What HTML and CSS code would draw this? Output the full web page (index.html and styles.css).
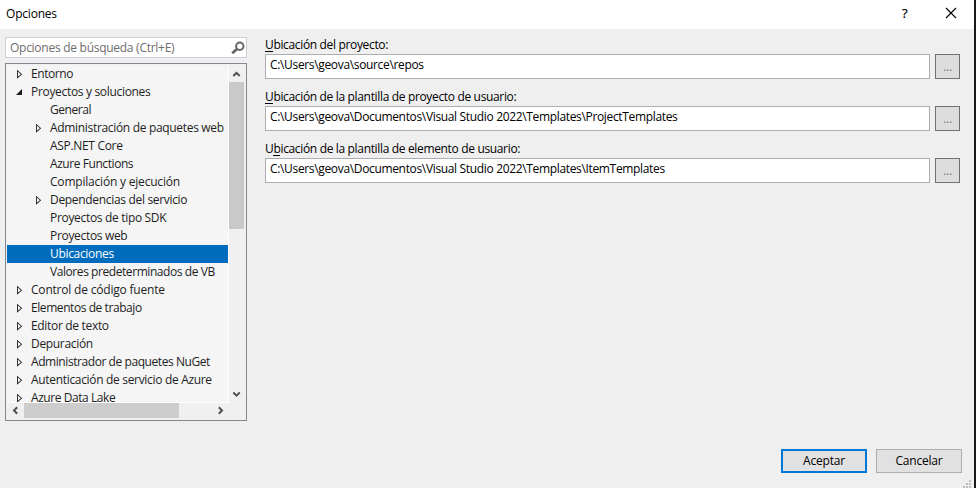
FILE: index.html
```html
<!DOCTYPE html>
<html lang="es">
<head>
<meta charset="utf-8">
<title>Opciones</title>
<link rel="stylesheet" href="styles.css">
</head>
<body>
<div class="dialog">
  <header class="titlebar">
    <span class="title">Opciones</span>
    <span class="help">?</span>
    <svg class="close" width="12" height="12" viewBox="0 0 12 12"><path d="M1 1L11 11M11 1L1 11"/></svg>
  </header>
  <main class="content">
    <aside class="sidebar">
      <div class="search">
        <span>Opciones de búsqueda (Ctrl+E)</span>
        <svg width="14" height="14" viewBox="0 0 14 14"><circle cx="8.8" cy="5.2" r="3.7"/><path class="handle" d="M6 8L1.2 12.3"/></svg>
      </div>
      <div class="tree">
        <ul class="rows">
          <li><i class="arrow"></i><span class="tight">Entorno</span></li>
          <li><i class="arrow open"></i><span>Proyectos y soluciones</span></li>
          <li class="sub"><i></i><span class="tight">General</span></li>
          <li class="sub"><i class="arrow"></i><span>Administración de paquetes web</span></li>
          <li class="sub"><i></i><span>ASP.NET Core</span></li>
          <li class="sub"><i></i><span class="tight">Azure Functions</span></li>
          <li class="sub"><i></i><span class="loose">Compilación y ejecución</span></li>
          <li class="sub"><i class="arrow"></i><span>Dependencias del servicio</span></li>
          <li class="sub"><i></i><span>Proyectos de tipo SDK</span></li>
          <li class="sub"><i></i><span>Proyectos web</span></li>
          <li class="sub selected"><i></i><span>Ubicaciones</span></li>
          <li class="sub"><i></i><span class="tight">Valores predeterminados de VB</span></li>
          <li><i class="arrow"></i><span class="loose">Control de código fuente</span></li>
          <li><i class="arrow"></i><span class="tight">Elementos de trabajo</span></li>
          <li><i class="arrow"></i><span>Editor de texto</span></li>
          <li><i class="arrow"></i><span>Depuración</span></li>
          <li><i class="arrow"></i><span class="tight">Administrador de paquetes NuGet</span></li>
          <li><i class="arrow"></i><span>Autenticación de servicio de Azure</span></li>
          <li><i class="arrow"></i><span class="tight">Azure Data Lake</span></li>
        </ul>
        <div class="vbar">
          <svg width="15" height="17" viewBox="0 0 15 17"><path d="M4.3 11L7.5 7.8L10.7 11"/></svg>
          <div class="thumb"></div>
          <svg class="end" width="15" height="17" viewBox="0 0 15 17"><path d="M4.3 6.5L7.5 9.7L10.7 6.5"/></svg>
        </div>
        <div class="hbar">
          <svg width="17" height="15" viewBox="0 0 17 15"><path d="M10.2 4.3L7 7.5L10.2 10.7"/></svg>
          <div class="thumb"></div>
          <svg class="end" width="17" height="15" viewBox="0 0 17 15"><path d="M6.8 4.3L10 7.5L6.8 10.7"/></svg>
        </div>
      </div>
    </aside>
    <section class="fields">
      <div class="field">
        <label><u>U</u>bicación del proyecto:</label>
        <div class="line"><div class="input">C:\Users\geova\source\repos</div><button class="browse">...</button></div>
      </div>
      <div class="field">
        <label><u>U</u>bicación de la plantilla de proyecto de usuario:</label>
        <div class="line"><div class="input">C:\Users\geova\Documentos\Visual Studio 2022\Templates\ProjectTemplates</div><button class="browse">...</button></div>
      </div>
      <div class="field">
        <label>U<u>b</u>icación de la plantilla de elemento de usuario:</label>
        <div class="line"><div class="input">C:\Users\geova\Documentos\Visual Studio 2022\Templates\ItemTemplates</div><button class="browse">...</button></div>
      </div>
    </section>
  </main>
  <footer class="footer">
    <button class="action primary">Aceptar</button>
    <button class="action">Cancelar</button>
  </footer>
  <svg class="grip" width="9" height="9" viewBox="0 0 9 9"><path d="M6 0h2v2h-2zM3 3h2v2h-2zM6 3h2v2h-2zM0 6h2v2h-2zM3 6h2v2h-2zM6 6h2v2h-2z"/></svg>
</div>
</body>
</html>
```
FILE: styles.css
```css
* { box-sizing: border-box; }
body {
  margin: 0;
  background: #efefef;
  font: 12px/18px "Open Sans", "Noto Sans", sans-serif;
  letter-spacing: -0.2px;
  color: #000;
}
button { font: inherit; letter-spacing: inherit; padding: 0; color: #000; }
.dialog {
  position: relative;
  display: flex;
  flex-direction: column;
  width: 976px;
  height: 488px;
  border-right: 2px solid #1a1a1a;
  overflow: hidden;
}
.titlebar {
  display: flex;
  align-items: center;
  flex: none;
  height: 29px;
  padding: 0 17px 3px 6px;
  background: #fff;
}
.title { flex: 1; padding-top: 2px; }
.help { width: 7px; margin-right: 36px; font-size: 13px; font-weight: 500; -webkit-text-stroke: 0.2px #000; }
.close { fill: none; stroke: #000; stroke-width: 1.1; }
.content { display: flex; gap: 18px; padding: 8px 14px 0 5px; height: 420px; }
.sidebar { width: 242px; flex: none; }
.search {
  display: flex;
  align-items: center;
  justify-content: space-between;
  height: 21px;
  padding: 0 1px 0 4px;
  border: 1px solid #ccceda;
  background: #fff;
  color: #6d6d6d;
  letter-spacing: -0.27px;
}
.search svg { fill: none; stroke: #656565; stroke-width: 2; }
.search .handle { stroke-width: 2.8; }
.tree {
  display: grid;
  grid-template: 338px 17px / 222px 16px;
  height: 358px;
  margin-top: 5px;
  padding: 1px;
  border: 1px solid #828790;
  background: #f0f0f0;
}
.rows {
  margin: 0;
  padding: 0;
  list-style: none;
  overflow: hidden;
  border-right: 1px solid #fff;
  border-bottom: 1px solid #fff;
  background: #f5f5f5;
  color: #1e1e1e;
  letter-spacing: -0.32px;
  white-space: nowrap;
}
.rows .tight { letter-spacing: -0.43px; }
.rows .loose { letter-spacing: -0.2px; }
.rows li { display: flex; align-items: center; height: 18px; padding-left: 9px; }
.rows .sub { padding-left: 28px; }
.rows i { width: 15px; height: 10px; flex: none; }
.rows .arrow { background: #1e1e1e; clip-path: path(evenodd, "M1 0.7L6.2 5.2L1 9.7ZM1.9 2.6V7.8L4.9 5.2Z"); }
.rows .open { clip-path: path("M6 2V8H0Z"); }
.rows .selected { background: #006cbe; color: #fff; }
.vbar { display: flex; flex-direction: column; }
.vbar .thumb { width: 15px; height: 147px; background: #c9c9c9; }
.vbar .end { margin-top: auto; }
.hbar { display: flex; width: 222px; }
.hbar .thumb { width: 155px; height: 15px; background: #cdcdcd; }
.hbar .end { margin-left: auto; }
.vbar svg, .hbar svg { fill: none; stroke: #505050; stroke-width: 2; }
.fields { flex: 1; letter-spacing: -0.34px; }
.field { height: 52px; }
label { display: block; height: 17px; line-height: 16px; }
u { text-decoration: none; box-shadow: 0 -1px 0 #000 inset; display: inline-block; height: 15px; line-height: 16px; vertical-align: top; }
.line { display: flex; gap: 5px; }
.input {
  width: 665px;
  height: 25px;
  padding: 1px 4px;
  border: 1px solid #abadb3;
  background: #fff;
}
.browse {
  width: 25px;
  height: 25px;
  border: 1px solid #707070;
  background: #ddd;
  color: #777;
  letter-spacing: -0.2px;
}
.footer { display: flex; gap: 9px; justify-content: flex-end; padding-right: 12px; }
.action { width: 86px; height: 24px; border: 1px solid #adadad; background: #e1e1e1; }
.primary { border: 2px solid #0078d7; }
.grip { position: absolute; right: 2px; bottom: -1px; fill: #bfbfbf; }
```
